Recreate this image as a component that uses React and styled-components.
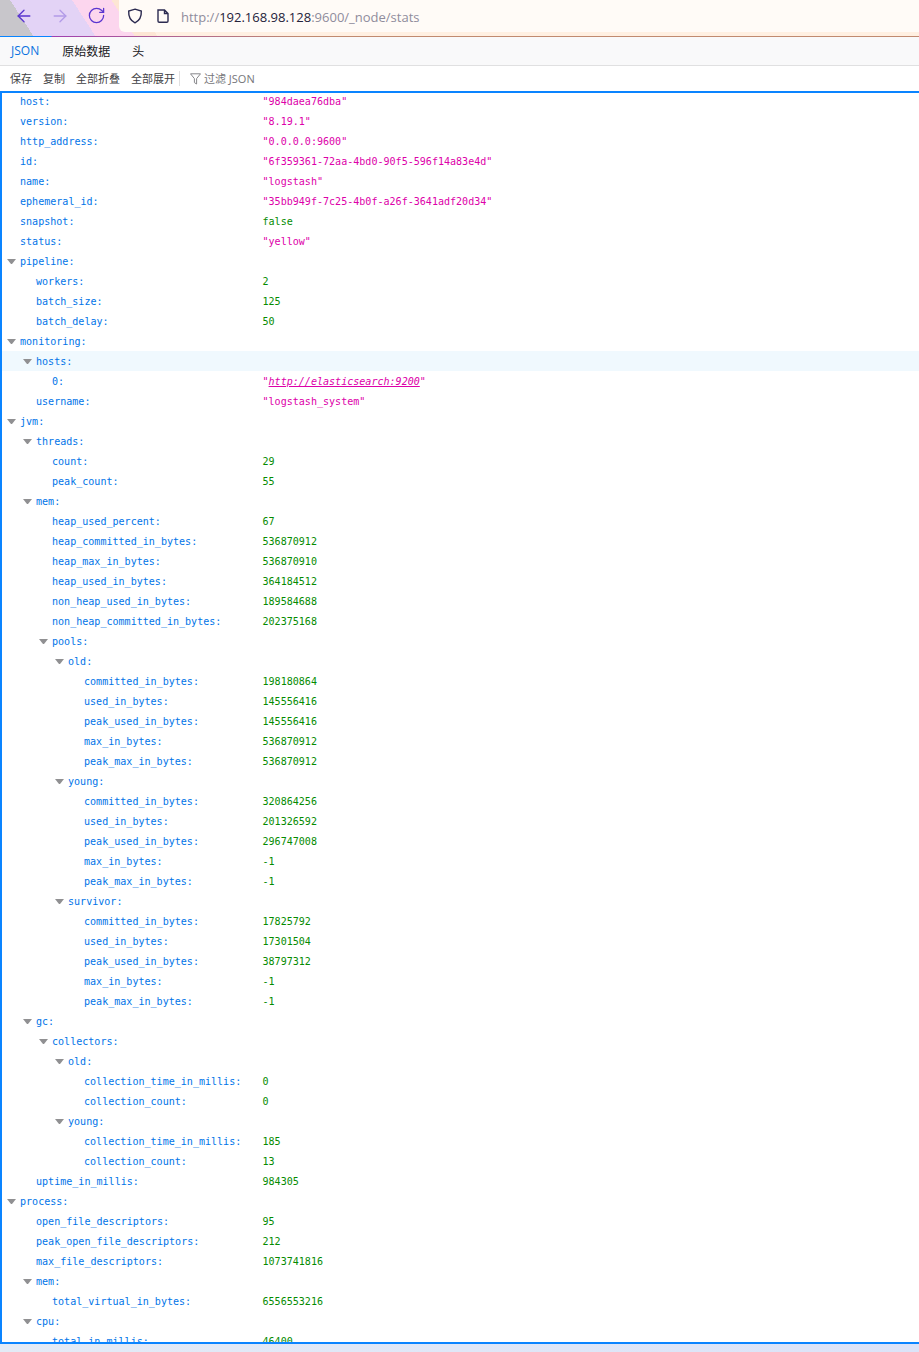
import React from "react";
import styled, { createGlobalStyle } from "styled-components";
import { ArrowLeft, ArrowRight, RotateCw } from "lucide-react";

const GlobalStyle = createGlobalStyle`
  html, body {
    margin: 0;
    padding: 0;
    height: 100%;
    overflow: hidden;
    background: #e4ebf8;
  }
  * { box-sizing: border-box; }
`;

const Page = styled.div`
  display: flex;
  flex-direction: column;
  height: 1352px;
  overflow: hidden;
  background: linear-gradient(90deg, #e3ebf6, #dbe3f8);
`;

const Chrome = styled.div`
  display: flex;
  height: 36px;
  flex: none;
  background: linear-gradient(57deg, #c8c6cb 0 28px, #e3d3f6 28px 80px, #fcd6ee 80px 113px, #fde6d4 113px 132px, #fff0e2 132px);
`;

const NavIcons = styled.div`
  display: flex;
  width: 119px;
  padding: 6px 0 0 6px;
  flex: none;
`;

const NavBtn = styled.div`
  display: flex;
  justify-content: center;
  width: 36px;
  color: ${(p) => (p.$dim ? "#b29be8" : "#5a35d0")};
  svg { display: block; }
`;

const AddressBar = styled.div`
  display: flex;
  align-items: center;
  flex: 1;
  height: 32px;
  padding: 0 0 1px 8px;
  background: #fffbf7;
  border-bottom-left-radius: 6px;
  color: #2b2a33;
`;

const UrlIcon = styled.svg`
  display: block;
  flex: none;
  width: 16px;
  height: 16px;
  margin-right: ${(p) => p.$gap}px;
  fill: none;
  stroke: #2b2a50;
  stroke-width: 1.4;
`;

const Url = styled.div`
  font: 13px/1 "Open Sans", "Noto Sans", sans-serif;
  padding-top: 3px;
  color: #8f8c9c;
  white-space: nowrap;
`;

const Host = styled.span`
  color: #24223a;
`;

const ChromeLine = styled.div`
  flex: none;
  height: 1px;
  background: linear-gradient(90deg, #0a84ff 0 51px, #a040b0 52px, #c08a70 300px);
`;

const Tabs = styled.div`
  display: flex;
  flex: none;
  height: 29px;
  background: #f9f9fa;
  border-bottom: 1px solid #e0e0e1;
  padding-left: 11px;
  gap: 22px;
  align-items: center;
  font-size: 12px;
  line-height: 1;
`;

const Tab = styled.div`
  color: ${(p) => (p.$active ? "#0a72e0" : "#18181c")};
  font-family: ${(p) => (p.$active ? `"Open Sans", sans-serif` : `"Noto Sans CJK SC", sans-serif`)};
  margin-right: ${(p) => (p.$active ? "1px" : "0")};
`;

const Toolbar = styled.div`
  display: flex;
  flex: none;
  height: 25px;
  align-items: center;
  padding-left: 10px;
  background: #fff;
  color: #3f3f44;
  font: 11px/1 "Noto Sans CJK SC", sans-serif;
`;

const ToolBtn = styled.div`
  margin-right: 11px;
  white-space: nowrap;
`;

const Sep = styled.div`
  width: 1px;
  height: 15px;
  background: #e0e0e1;
  margin: 0 10px 0 -7px;
`;

const FilterIcon = styled.svg`
  display: block;
  width: 11px;
  height: 12px;
  margin-right: 3px;
  fill: none;
  stroke: #88888c;
  stroke-width: 1;
`;

const FilterText = styled.div`
  color: #76767a;
  font: 11px/1 "Open Sans", "Noto Sans CJK SC", sans-serif;
`;

const Panel = styled.div`
  flex: none;
  width: calc(100% + 2px);
  height: 1253px;
  background: #fff;
  overflow: hidden;
  outline: 2px solid #0a84ff;
  outline-offset: -2px;
  font: 10.05px/22px "DejaVu Sans Mono", monospace;
`;

const Row = styled.div`
  display: grid;
  grid-template-columns: 262.5px 1fr;
  height: 20px;
  white-space: nowrap;
  background: ${(p) => (p.$hover ? "#f0f9fe" : "transparent")};
`;

const KeyCell = styled.div`
  display: flex;
  align-items: flex-start;
  padding-left: ${(p) => 7 + p.$level * 16}px;
  color: #0074e8;
`;

const Twisty = styled.span`
  flex: none;
  width: 9px;
  height: 5px;
  margin: 8px 4px 0 0;
  border-style: solid;
  border-width: ${(p) => (p.$open ? "5px 4.5px 0 4.5px" : "0")};
  border-color: #909092 transparent transparent transparent;
  visibility: ${(p) => (p.$open ? "visible" : "hidden")};
`;

const Value = styled.div`
  color: ${(p) => (p.$string ? "#dd00a9" : "#058b00")};
`;

const ValueLink = styled.a`
  color: #dd00a9;
  font-style: italic;
  text-decoration: underline;
`;

const stats = {
  host: "984daea76dba",
  version: "8.19.1",
  http_address: "0.0.0.0:9600",
  id: "6f359361-72aa-4bd0-90f5-596f14a83e4d",
  name: "logstash",
  ephemeral_id: "35bb949f-7c25-4b0f-a26f-3641adf20d34",
  snapshot: false,
  status: "yellow",
  pipeline: { workers: 2, batch_size: 125, batch_delay: 50 },
  monitoring: { hosts: ["http://elasticsearch:9200"], username: "logstash_system" },
  jvm: {
    threads: { count: 29, peak_count: 55 },
    mem: {
      heap_used_percent: 67,
      heap_committed_in_bytes: 536870912,
      heap_max_in_bytes: 536870910,
      heap_used_in_bytes: 364184512,
      non_heap_used_in_bytes: 189584688,
      non_heap_committed_in_bytes: 202375168,
      pools: {
        old: {
          committed_in_bytes: 198180864,
          used_in_bytes: 145556416,
          peak_used_in_bytes: 145556416,
          max_in_bytes: 536870912,
          peak_max_in_bytes: 536870912,
        },
        young: {
          committed_in_bytes: 320864256,
          used_in_bytes: 201326592,
          peak_used_in_bytes: 296747008,
          max_in_bytes: -1,
          peak_max_in_bytes: -1,
        },
        survivor: {
          committed_in_bytes: 17825792,
          used_in_bytes: 17301504,
          peak_used_in_bytes: 38797312,
          max_in_bytes: -1,
          peak_max_in_bytes: -1,
        },
      },
    },
    gc: {
      collectors: {
        old: { collection_time_in_millis: 0, collection_count: 0 },
        young: { collection_time_in_millis: 185, collection_count: 13 },
      },
    },
    uptime_in_millis: 984305,
  },
  process: {
    open_file_descriptors: 95,
    peak_open_file_descriptors: 212,
    max_file_descriptors: 1073741816,
    mem: { total_virtual_in_bytes: 6556553216 },
    cpu: { total_in_millis: 46400 },
  },
};

function renderValue(value) {
  if (typeof value === "string" && value.startsWith("http")) {
    return (
      <Value $string>
        "<ValueLink>{value}</ValueLink>"
      </Value>
    );
  }
  if (typeof value === "string") return <Value $string>"{value}"</Value>;
  return <Value>{String(value)}</Value>;
}

function renderRows(data, level = 0, path = "") {
  return Object.entries(data).flatMap(([key, value]) => {
    const id = path + "/" + key;
    const open = typeof value === "object";
    const row = (
      <Row key={id} $hover={id === "/monitoring/hosts"}>
        <KeyCell $level={level}>
          <Twisty $open={open} />
          {key}:
        </KeyCell>
        {open ? <div /> : renderValue(value)}
      </Row>
    );
    return open ? [row, ...renderRows(value, level + 1, id)] : [row];
  });
}

export default function App() {
  return (
    <Page>
      <GlobalStyle />
      <Chrome>
        <NavIcons>
          <NavBtn><ArrowLeft size={20} strokeWidth={1.6} /></NavBtn>
          <NavBtn $dim><ArrowRight size={20} strokeWidth={1.6} /></NavBtn>
          <NavBtn><RotateCw size={19} strokeWidth={1.6} /></NavBtn>
        </NavIcons>
        <AddressBar>
          <UrlIcon viewBox="0 0 16 16" $gap={12}>
            <path d="M8 1.2 L14.3 3 C14.6 8.5 12.6 12.6 8 14.8 C3.4 12.6 1.4 8.5 1.7 3 Z" />
          </UrlIcon>
          <UrlIcon viewBox="0 0 16 16" $gap={10}>
            <path d="M3 2 H9.5 L13 5.5 V13 A1.2 1.2 0 0 1 11.8 14.2 H4.2 A1.2 1.2 0 0 1 3 13 Z M9.5 2 V5.5 H13" />
          </UrlIcon>
          <Url>
            http://<Host>192.168.98.128</Host>:9600/_node/stats
          </Url>
        </AddressBar>
      </Chrome>
      <ChromeLine />
      <Tabs>
        <Tab $active>JSON</Tab>
        <Tab>原始数据</Tab>
        <Tab>头</Tab>
      </Tabs>
      <Toolbar>
        <ToolBtn>保存</ToolBtn>
        <ToolBtn>复制</ToolBtn>
        <ToolBtn>全部折叠</ToolBtn>
        <ToolBtn>全部展开</ToolBtn>
        <Sep />
        <FilterIcon viewBox="0 0 11 12">
          <path d="M0.5 0.8 H10.5 L6.6 5.6 V11 L4.4 9.6 V5.6 Z" />
        </FilterIcon>
        <FilterText>过滤 JSON</FilterText>
      </Toolbar>
      <Panel>{renderRows(stats)}</Panel>
    </Page>
  );
}
